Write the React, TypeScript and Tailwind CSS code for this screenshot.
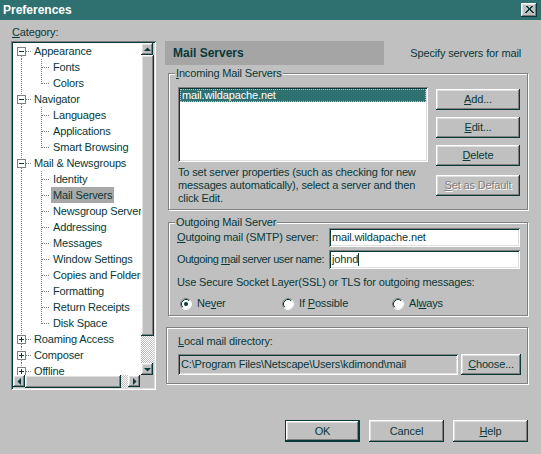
import React from 'react';

const raised =
  'shadow-[inset_-1px_-1px_0_#083838,inset_1px_1px_0_#ffffff,inset_-2px_-2px_0_#808080,inset_2px_2px_0_#dfdfdf]';
const sunken =
  'shadow-[inset_1px_1px_0_#808080,inset_-1px_-1px_0_#ffffff,inset_2px_2px_0_#083838,inset_-2px_-2px_0_#dfdfdf]';
const etched = 'border border-[#808080] shadow-[inset_1px_1px_0_#ffffff,1px_1px_0_#ffffff]';
const checker =
  'bg-[image:repeating-conic-gradient(#ffffff_0%_25%,#c0c0c0_0%_50%)] bg-[length:2px_2px]';

type Node = { t: string; l: 0 | 1; open?: boolean; first?: boolean; last?: boolean; sel?: boolean };

const tree: Node[] = [
  { t: 'Appearance', l: 0, open: true, first: true },
  { t: 'Fonts', l: 1 },
  { t: 'Colors', l: 1, last: true },
  { t: 'Navigator', l: 0, open: true },
  { t: 'Languages', l: 1 },
  { t: 'Applications', l: 1 },
  { t: 'Smart Browsing', l: 1, last: true },
  { t: 'Mail & Newsgroups', l: 0, open: true },
  { t: 'Identity', l: 1 },
  { t: 'Mail Servers', l: 1, sel: true },
  { t: 'Newsgroup Servers', l: 1 },
  { t: 'Addressing', l: 1 },
  { t: 'Messages', l: 1 },
  { t: 'Window Settings', l: 1 },
  { t: 'Copies and Folders', l: 1 },
  { t: 'Formatting', l: 1 },
  { t: 'Return Receipts', l: 1 },
  { t: 'Disk Space', l: 1, last: true },
  { t: 'Roaming Access', l: 0 },
  { t: 'Composer', l: 0 },
  { t: 'Offline', l: 0 },
];

const dot = { stroke: '#808080', strokeDasharray: '1 1', shapeRendering: 'crispEdges' as const };

function Rootline({ n }: { n: Node }) {
  return (
    <svg width="19" height="16" className="shrink-0">
      {!n.first && <line x1="8.5" y1="0" x2="8.5" y2="4" {...dot} />}
      <line x1="8.5" y1="13" x2="8.5" y2="16" {...dot} />
      <line x1="13" y1="8.5" x2="19" y2="8.5" {...dot} />
      <rect x="4.5" y="4.5" width="8" height="8" fill="#ffffff" stroke="#808080" shapeRendering="crispEdges" />
      <line x1="6" y1="8.5" x2="11" y2="8.5" stroke="#083838" shapeRendering="crispEdges" />
      {!n.open && <line x1="8.5" y1="6" x2="8.5" y2="11" stroke="#083838" shapeRendering="crispEdges" />}
    </svg>
  );
}

function Childline({ n }: { n: Node }) {
  return (
    <>
      <svg width="21" height="16" className="shrink-0">
        <line x1="8.5" y1="0" x2="8.5" y2="16" {...dot} />
      </svg>
      <svg width="17" height="16" className="shrink-0">
        <line x1="7.5" y1="0" x2="7.5" y2={n.last ? 9 : 16} {...dot} />
        <line x1="8" y1="8.5" x2="16" y2="8.5" {...dot} />
      </svg>
    </>
  );
}

function Arrow({ dir }: { dir: 'up' | 'down' | 'left' | 'right' }) {
  const pts = {
    up: '2,7 9,7 5.5,3.5',
    down: '2,4 9,4 5.5,7.5',
    left: '7,2 7,9 3.5,5.5',
    right: '4,2 4,9 7.5,5.5',
  }[dir];
  return (
    <div className={`w-[12px] h-[12px] shrink-0 bg-[#c0c0c0] ${raised} flex items-center justify-center`}>
      <svg width="11" height="11">
        <polygon points={pts} fill="#083838" />
      </svg>
    </div>
  );
}

function Btn({ children, className = '' }: { children: React.ReactNode; className?: string }) {
  return (
    <div className={`flex items-center justify-center bg-[#c0c0c0] ${raised} ${className}`}>{children}</div>
  );
}

function Radio({ checked, children, className = '' }: { checked?: boolean; children: React.ReactNode; className?: string }) {
  return (
    <div className={`flex items-center gap-[5px] ${className}`}>
      <svg width="12" height="12">
        <circle cx="6" cy="6" r="5" fill="#ffffff" />
        <path d="M2.11 9.89 A5.5 5.5 0 0 1 9.89 2.11" stroke="#808080" fill="none" />
        <path d="M9.89 2.11 A5.5 5.5 0 0 1 2.11 9.89" stroke="#ffffff" fill="none" />
        <path d="M2.82 9.18 A4.5 4.5 0 0 1 9.18 2.82" stroke="#083838" fill="none" />
        {checked && <circle cx="6" cy="6" r="2" fill="#083838" />}
      </svg>
      <span>{children}</span>
    </div>
  );
}

const U = ({ children }: { children: React.ReactNode }) => <span className="underline underline-offset-1">{children}</span>;

export default function App() {
  return (
    <div className="w-[541px] h-[454px] bg-[#c0c0c0] flex flex-col overflow-hidden text-[11px] leading-[13px] text-[#083838] font-['Liberation_Sans',Arial,sans-serif] tracking-[-0.15px] select-none">
      {/* title bar */}
      <div className="h-[20px] shrink-0 bg-[#2f7171] flex items-center justify-between pl-[3px] pr-[4px]">
        <span className="text-white font-bold text-[12px] tracking-normal">Preferences</span>
        <div className={`w-[16px] h-[14px] bg-[#c0c0c0] ${raised} flex items-center justify-center`}>
          <svg width="9" height="8">
            <path d="M1 0 L8 7 M8 0 L1 7 M2 0 L9 7 M7 0 L0 7" stroke="#083838" shapeRendering="crispEdges" />
          </svg>
        </div>
      </div>

      <div className="flex pl-[11px] pt-[6px] gap-[9px]">
        {/* category tree */}
        <div className="w-[145px] flex flex-col shrink-0">
          <div className="h-[15px] pl-[1px]">
            <U>C</U>ategory:
          </div>
          <div className={`h-[349px] bg-white p-[2px] ${sunken} flex flex-col`}>
            <div className="flex flex-1 min-h-0">
              <div className="flex-1 overflow-hidden whitespace-nowrap">
                {tree.map((n) => (
                  <div key={n.t} className="flex h-[16px] items-center">
                    {n.l === 0 ? <Rootline n={n} /> : <Childline n={n} />}
                    <span className={`px-[2px] leading-[16px] ${n.sel ? 'bg-[#a8a8a8]' : ''}`}>{n.t}</span>
                  </div>
                ))}
              </div>
              <div className="w-[13px] flex flex-col shrink-0 bg-[#c0c0c0]">
                <Arrow dir="up" />
                <div className={`flex-1 bg-[#c0c0c0] ${raised}`} />
                <div className={`h-[27px] ${checker}`} />
                <Arrow dir="down" />
              </div>
            </div>
            <div className="h-[13px] flex shrink-0 bg-[#c0c0c0]">
              <Arrow dir="left" />
              <div className={`w-[96px] ${raised}`} />
              <div className={`w-[7px] ${checker}`} />
              <Arrow dir="right" />
              <div className="flex-1 bg-[#c0c0c0]" />
            </div>
          </div>
        </div>

        {/* right panel */}
        <div className="w-[364px] flex flex-col pt-[15px]">
          <div className="flex items-center justify-between h-[24px]">
            <div className="w-[219px] h-[24px] bg-[#a5a5a5] flex items-center pl-[8px] font-bold text-[12px] tracking-normal">
              Mail Servers
            </div>
            <span className="pr-[8px]">Specify servers for mail</span>
          </div>

          <fieldset className={`mt-[2px] ml-[3px] w-[360px] ${etched} pl-[9px] pr-[7px] pb-[4px]`}>
            <legend className="-ml-[3px] px-[1px] bg-[#c0c0c0]">
              <U>I</U>ncoming Mail Servers
            </legend>
            <div className="flex gap-[8px] pt-[7px]">
              <div className="w-[250px] flex flex-col">
                <div className={`h-[75px] bg-white p-[2px] ${sunken}`}>
                  <div className="h-[13px] bg-[#2f7171] text-white pl-[2px] outline-1 outline-dotted outline-[#c0c0c0] -outline-offset-1">
                    mail.wildapache.net
                  </div>
                </div>
                <p className="mt-[4px]">
                  To set server properties (such as checking for new messages automatically), select a server and then click Edit.
                </p>
              </div>
              <div className="w-[84px] flex flex-col gap-[7px] pt-[2px]">
                <Btn className="h-[21px]">
                  <U>A</U>dd...
                </Btn>
                <Btn className="h-[21px]">
                  <U>E</U>dit...
                </Btn>
                <Btn className="h-[21px]">
                  <U>D</U>elete
                </Btn>
                <Btn className="h-[21px] mt-[2px] text-[#808080] [text-shadow:1px_1px_0_#ffffff]">
                  <U>S</U>et as Default
                </Btn>
              </div>
            </div>
          </fieldset>

          <fieldset className={`mt-[6px] ml-[3px] w-[360px] ${etched} pl-[8px] pr-[7px] pb-[5px]`}>
            <legend className="-ml-[2px] px-[1px] bg-[#c0c0c0]">Outgoing Mail Server</legend>
            <div className="flex items-center -mt-[1px] h-[19px]">
              <span className="w-[152px] shrink-0 whitespace-nowrap">
                <U>O</U>utgoing mail (SMTP) server:
              </span>
              <div className={`w-[191px] shrink-0 h-[19px] bg-white p-[2px] pl-[3px] ${sunken} flex items-center`}>
                mail.wildapache.net
              </div>
            </div>
            <div className="flex items-center mt-[3px] h-[19px]">
              <span className="w-[152px] shrink-0 whitespace-nowrap tracking-[-0.4px]">
                Outgoing <U>m</U>ail server user name:
              </span>
              <div className={`w-[191px] shrink-0 h-[19px] bg-white p-[2px] pl-[3px] ${sunken} flex items-center`}>
                johnd<span className="w-px h-[13px] bg-[#083838]" />
              </div>
            </div>
            <div className="mt-[7px]">Use Secure Socket Layer(SSL) or TLS for outgoing messages:</div>
            <div className="flex mt-[8px] pl-[3px]">
              <Radio checked className="w-[102px]">
                Ne<U>v</U>er
              </Radio>
              <Radio className="w-[110px]">
                If <U>P</U>ossible
              </Radio>
              <Radio>
                Al<U>w</U>ays
              </Radio>
            </div>
          </fieldset>

          <div className={`mt-[11px] ml-[1px] w-[362px] ${etched} pl-[11px] pr-[6px] pt-[7px] pb-[8px]`}>
            <div>
              <U>L</U>ocal mail directory:
            </div>
            <div className="flex gap-[3px] mt-[6px]">
              <div className={`w-[280px] h-[21px] bg-[#c0c0c0] p-[2px] pl-[3px] ${sunken} flex items-center whitespace-nowrap`}>
                C:\Program Files\Netscape\Users\kdimond\mail
              </div>
              <Btn className="w-[60px] h-[21px]">
                <U>C</U>hoose...
              </Btn>
            </div>
          </div>
        </div>
      </div>

      <div className="flex justify-end gap-[9px] pr-[13px] mt-[30px]">
        <Btn className="w-[75px] h-[22px] border border-[#083838]">OK</Btn>
        <Btn className="w-[75px] h-[22px]">Cancel</Btn>
        <Btn className="w-[75px] h-[22px]">
          <U>H</U>elp
        </Btn>
      </div>
    </div>
  );
}
